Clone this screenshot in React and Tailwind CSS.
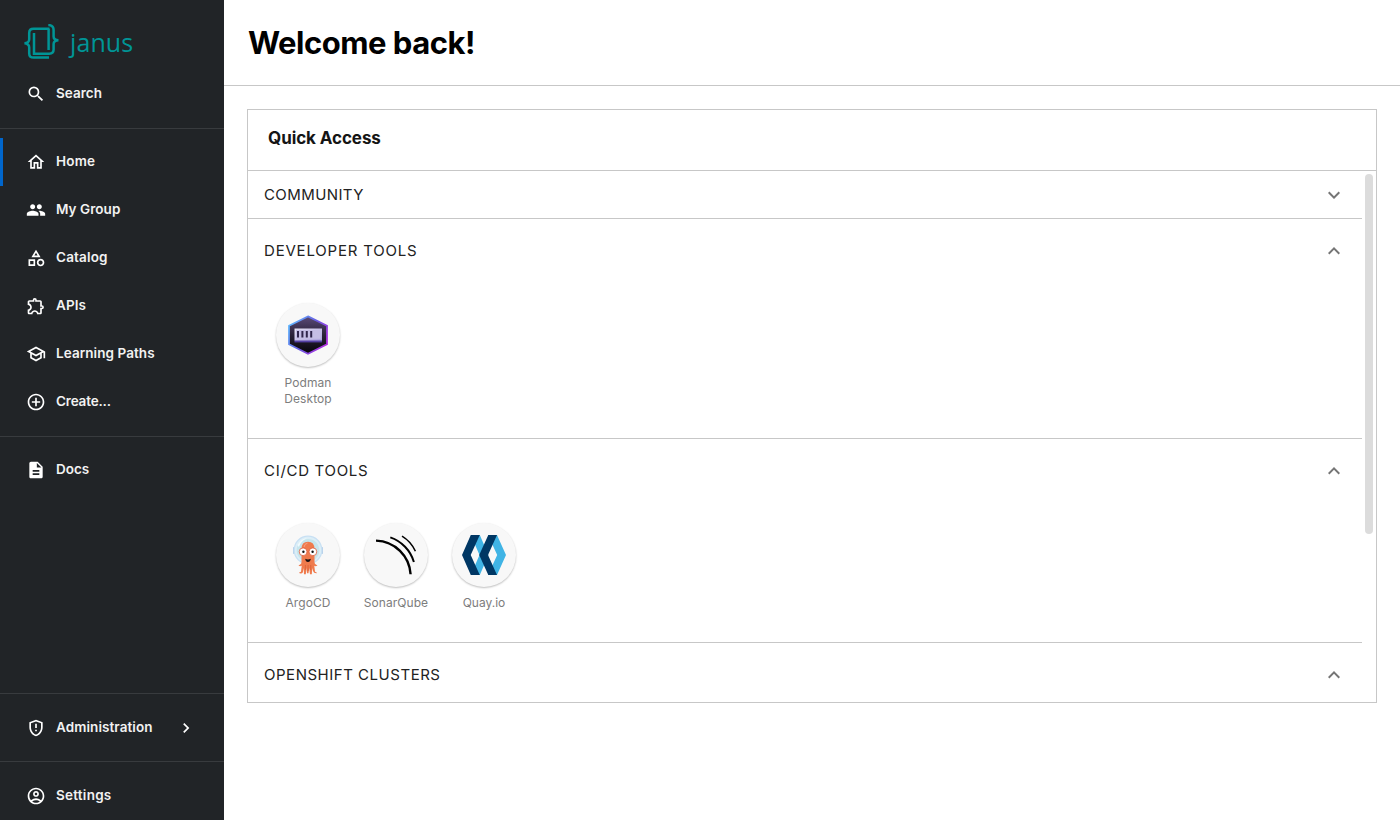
import {
  MdSearch,
  MdOutlineHome,
  MdPeople,
  MdOutlineCategory,
  MdOutlineExtension,
  MdOutlineSchool,
  MdControlPoint,
  MdDescription,
  MdOutlineGppMaybe,
  MdOutlineAccountCircle,
  MdChevronRight,
  MdExpandLess,
  MdExpandMore,
} from "react-icons/md";

function Logo() {
  return (
    <div className="flex h-[70px] shrink-0 items-start pl-6 text-[#009596]">
      <svg width="36" height="36" viewBox="0 0 36 36" className="mt-6 shrink-0" fill="none" stroke="currentColor" strokeWidth="2.5">
        <path d="M25.5 4.8H9.5Q5.2 4.8 5.2 9v6.2Q5.2 19 .5 19.3Q5.2 19.8 5.2 23.4v6.1Q5.2 33.6 9.5 33.6H25" />
        <path d="M24.3 1.1Q29.6 1.1 29.6 6v6.4Q29.6 15.8 34.4 16.2Q29.6 16.6 29.6 20v5.6Q29.6 29.8 25.2 29.8H10V9" />
        <path d="M24.6 4.8V26" />
      </svg>
      <span className="ml-[10px] mt-[25px] font-['Open_Sans','Noto_Sans',sans-serif] text-[25px] leading-[34px] tracking-[0.1px]">janus</span>
    </div>
  );
}

function NavItem({ icon: Icon, label, tracking = "", active = false, arrow = false }) {
  return (
    <div
      className={`flex h-12 shrink-0 items-center border-l-[3px] ${active ? "border-[#0066cc]" : "border-transparent"} pl-[23px] text-white`}
    >
      <Icon size={20} className="shrink-0" />
      <span className={`ml-[10px] pb-[3px] text-[13.5px] font-semibold leading-5 text-[#f2f2f2] ${arrow ? "w-[120px]" : ""} ${tracking}`}>
        {label}
      </span>
      {arrow && <MdChevronRight size={20} />}
    </div>
  );
}

function Divider() {
  return <div className="h-px shrink-0 bg-[#383b3e]" />;
}

function Sidebar() {
  return (
    <nav className="flex w-56 shrink-0 flex-col bg-[#212427]">
      <Logo />
      <NavItem icon={MdSearch} label="Search" tracking="tracking-[0.02px]" />
      <div className="h-[10px] shrink-0" />
      <Divider />
      <div className="flex flex-col py-[9px]">
        <NavItem icon={MdOutlineHome} label="Home" tracking="tracking-[0.2px]" active />
        <NavItem icon={MdPeople} label="My Group" tracking="tracking-[0.05px]" />
        <NavItem icon={MdOutlineCategory} label="Catalog" tracking="tracking-[0.18px]" />
        <NavItem icon={MdOutlineExtension} label="APIs" tracking="tracking-[0.1px]" />
        <NavItem icon={MdOutlineSchool} label="Learning Paths" tracking="tracking-[0.07px]" />
        <NavItem icon={MdControlPoint} label="Create..." tracking="tracking-[-0.17px]" />
      </div>
      <div className="h-px shrink-0" />
      <Divider />
      <div className="pt-[9px]">
        <NavItem icon={MdDescription} label="Docs" />
      </div>
      <div className="grow" />
      <Divider />
      <div className="flex flex-col pb-[9px] pt-[10px]">
        <NavItem icon={MdOutlineGppMaybe} label="Administration" tracking="tracking-[0.08px]" arrow />
      </div>
      <Divider />
      <div className="pt-[10px]">
        <NavItem icon={MdOutlineAccountCircle} label="Settings" tracking="tracking-[0.25px]" />
      </div>
    </nav>
  );
}

function PodmanIcon() {
  return (
    <svg width="40" height="40" viewBox="0 0 40 40">
      <defs>
        <linearGradient id="pd-edge" x1="0" y1="0.2" x2="1" y2="0.8">
          <stop offset="0" stopColor="#60b8ff" />
          <stop offset="0.5" stopColor="#6a5be2" />
          <stop offset="1" stopColor="#b52be0" />
        </linearGradient>
        <linearGradient id="pd-fill" x1="0" y1="0" x2="0" y2="1">
          <stop offset="0" stopColor="#5b4a78" />
          <stop offset="0.5" stopColor="#2a2238" />
          <stop offset="1" stopColor="#050408" />
        </linearGradient>
        <linearGradient id="pd-box" x1="0" y1="0" x2="1" y2="1">
          <stop offset="0" stopColor="#e9e6f5" />
          <stop offset="1" stopColor="#aaa0dc" />
        </linearGradient>
      </defs>
      <path d="M20 1.4L39 10.8V29.3L20 38.7L1 29.3V10.8Z" fill="url(#pd-fill)" stroke="url(#pd-edge)" strokeWidth="1.8" />
      <path d="M6.5 25h27.5v2.4H6.5z" fill="#5440a4" />
      <path d="M6.5 13.5h27.5v12H6.5z" fill="url(#pd-box)" />
      <path d="M8 14.8h24.5v9H8z" fill="#c5bee5" />
      <path d="M9 16h2v6.5H9zM13.4 16h2v6.5h-2zM17.8 16h2v6.5h-2zM22.2 16h2v6.5h-2z" fill="#30264c" />
    </svg>
  );
}

function ArgoIcon() {
  return (
    <svg width="40" height="40" viewBox="0 0 40 40">
      <path d="M6.5 12.5H5.5v6h1zM33.5 12.5H34.5v6h-1z" fill="#b5cfe9" stroke="#b5cfe9" />
      <circle cx="20" cy="15" r="13.8" fill="#dceef7" stroke="#c8e0f3" strokeWidth="1.2" />
      <circle cx="20" cy="15.3" r="11.3" fill="#c6e5ec" />
      <path d="M9.5 10Q13 3.5 19 3.2Q13 6 10.8 12Z" fill="#f0fafd" />
      <path
        d="M13.5 14Q13.5 6.7 20 6.7Q26.5 6.7 26.5 14V27Q26.5 29.6 29.5 30.3Q27.8 31.7 26.3 30.8L27 36.7Q29 37 28.8 38.3Q25.7 38.5 25 36L24.2 33L23.8 39.2H22L21.2 33L20.5 38.3H19L18.5 33L17.8 39.2H16L15.7 33L14.8 37.5Q13.5 39.2 11 38.1Q11.3 36.9 13 36.7L13.7 30.8Q11.8 31.7 10.5 30.3Q13.5 29.6 13.5 27Z"
        fill="#ef7b4d"
      />
      <path d="M17.4 30v5M20.1 30v6M22.7 30v5" stroke="#d75b36" strokeWidth=".7" />
      <path d="M16 12Q16.5 8.6 19.5 8.2" stroke="#f6a184" strokeWidth="1" fill="none" />
      <circle cx="15.1" cy="16.8" r="3.9" fill="#fff" stroke="#dd5b37" strokeWidth=".8" />
      <circle cx="24.9" cy="16.8" r="3.9" fill="#fff" stroke="#dd5b37" strokeWidth=".8" />
      <circle cx="15.4" cy="16.7" r="1.2" fill="#111" />
      <circle cx="24.6" cy="16.7" r="1.2" fill="#111" />
      <path d="M17.2 23.8Q20 25.2 22.8 23.8Q22.3 27 20 27Q17.7 27 17.2 23.8Z" fill="#1b1011" />
    </svg>
  );
}

function SonarIcon() {
  return (
    <svg width="40" height="40" viewBox="0 0 40 40" fill="none" stroke="#000">
      <path d="M0 5.6C19 6.2 33.5 21 34.6 39.3" strokeWidth="2.4" />
      <path d="M14.3 2.4C25.5 6.2 34.5 15.4 37.9 27" strokeWidth="2" />
      <path d="M26 1.2C32 4.8 36.5 10 39.4 16.2" strokeWidth="1.5" />
    </svg>
  );
}

function QuayIcon() {
  return (
    <svg width="44" height="40" viewBox="0 0 44 40">
      <path d="M8.8 0H17.8L26.5 20L17.8 40H8.8L17.5 20Z" fill="#40b4e5" />
      <path d="M26 0H35L44 20L35 40H26L35.2 20Z" fill="#40b4e5" />
      <path d="M8.8 0H17.8L8.7 20L17.8 40H8.8L0 20Z" fill="#003764" />
      <path d="M26.3 0H35L26 20L35 40H26.3L17.2 20Z" fill="#003764" />
    </svg>
  );
}

function Tool({ icon, label, tracking = "" }) {
  return (
    <div className="flex w-[88px] flex-col items-center">
      <div className="flex h-16 w-16 items-center justify-center rounded-full bg-[#f8f8f8] shadow-[0_1px_2px_rgba(0,0,0,0.26)]">{icon}</div>
      <div className={`mt-2 w-[66px] text-center text-[12px] leading-4 text-[#7d7d7d] ${tracking}`}>{label}</div>
    </div>
  );
}

function Section({ title, tracking, height, collapsed = false, last = false, children }) {
  const Chevron = collapsed ? MdExpandMore : MdExpandLess;
  return (
    <div className={`flex shrink-0 flex-col ${height} ${last ? "" : "border-b border-[#c7c7c7]"}`}>
      <div className={`flex shrink-0 items-center justify-between pl-4 pr-4 ${collapsed ? "h-12" : "h-16"}`}>
        <span className={`text-[15px] font-normal leading-6 text-[#222222] ${tracking}`}>{title}</span>
        <Chevron size={24} className="text-[#757575]" />
      </div>
      {children && <div className="flex pl-4 pt-5">{children}</div>}
    </div>
  );
}

export default function App() {
  return (
    <div className="flex h-[820px] w-[1400px] overflow-hidden bg-white font-['Inter','Noto_Sans',sans-serif]">
      <Sidebar />
      <main className="flex grow flex-col">
        <header className="flex h-[86px] shrink-0 items-center border-b border-[#c7c7c7] pl-6">
          <h1 className="text-[31px] font-bold leading-10 tracking-[-0.5px] text-black">Welcome back!</h1>
        </header>
        <section className="ml-[23px] mr-[23px] mt-[23px] flex h-[594px] flex-col border border-[#c7c7c7]">
          <div className="h-[61px] shrink-0 border-b border-[#c7c7c7] pl-5 pt-4">
            <h2 className="text-[17px] font-bold leading-6 tracking-[-0.08px] text-[#151515]">Quick Access</h2>
          </div>
          <div className="flex min-h-0 grow">
            <div className="flex w-[1114px] flex-col overflow-hidden">
              <Section title="COMMUNITY" tracking="tracking-[0.4px]" height="h-12" collapsed />
              <Section title="DEVELOPER TOOLS" tracking="tracking-[0.8px]" height="h-[220px]">
                <Tool icon={<PodmanIcon />} label="Podman Desktop" tracking="tracking-[0.05px]" />
              </Section>
              <Section title="CI/CD TOOLS" tracking="tracking-[0.7px]" height="h-[204px]">
                <Tool icon={<ArgoIcon />} label="ArgoCD" tracking="tracking-[0.1px]" />
                <Tool icon={<SonarIcon />} label="SonarQube" tracking="tracking-[0.05px]" />
                <Tool icon={<QuayIcon />} label="Quay.io" />
              </Section>
              <Section title="OPENSHIFT CLUSTERS" tracking="tracking-[0.52px]" height="h-16" last />
            </div>
            <div className="flex flex-col pl-[3px] pt-[3px]">
              <div className="h-[360px] w-2 rounded-full bg-[#dcdcdc]" />
            </div>
          </div>
        </section>
      </main>
    </div>
  );
}
